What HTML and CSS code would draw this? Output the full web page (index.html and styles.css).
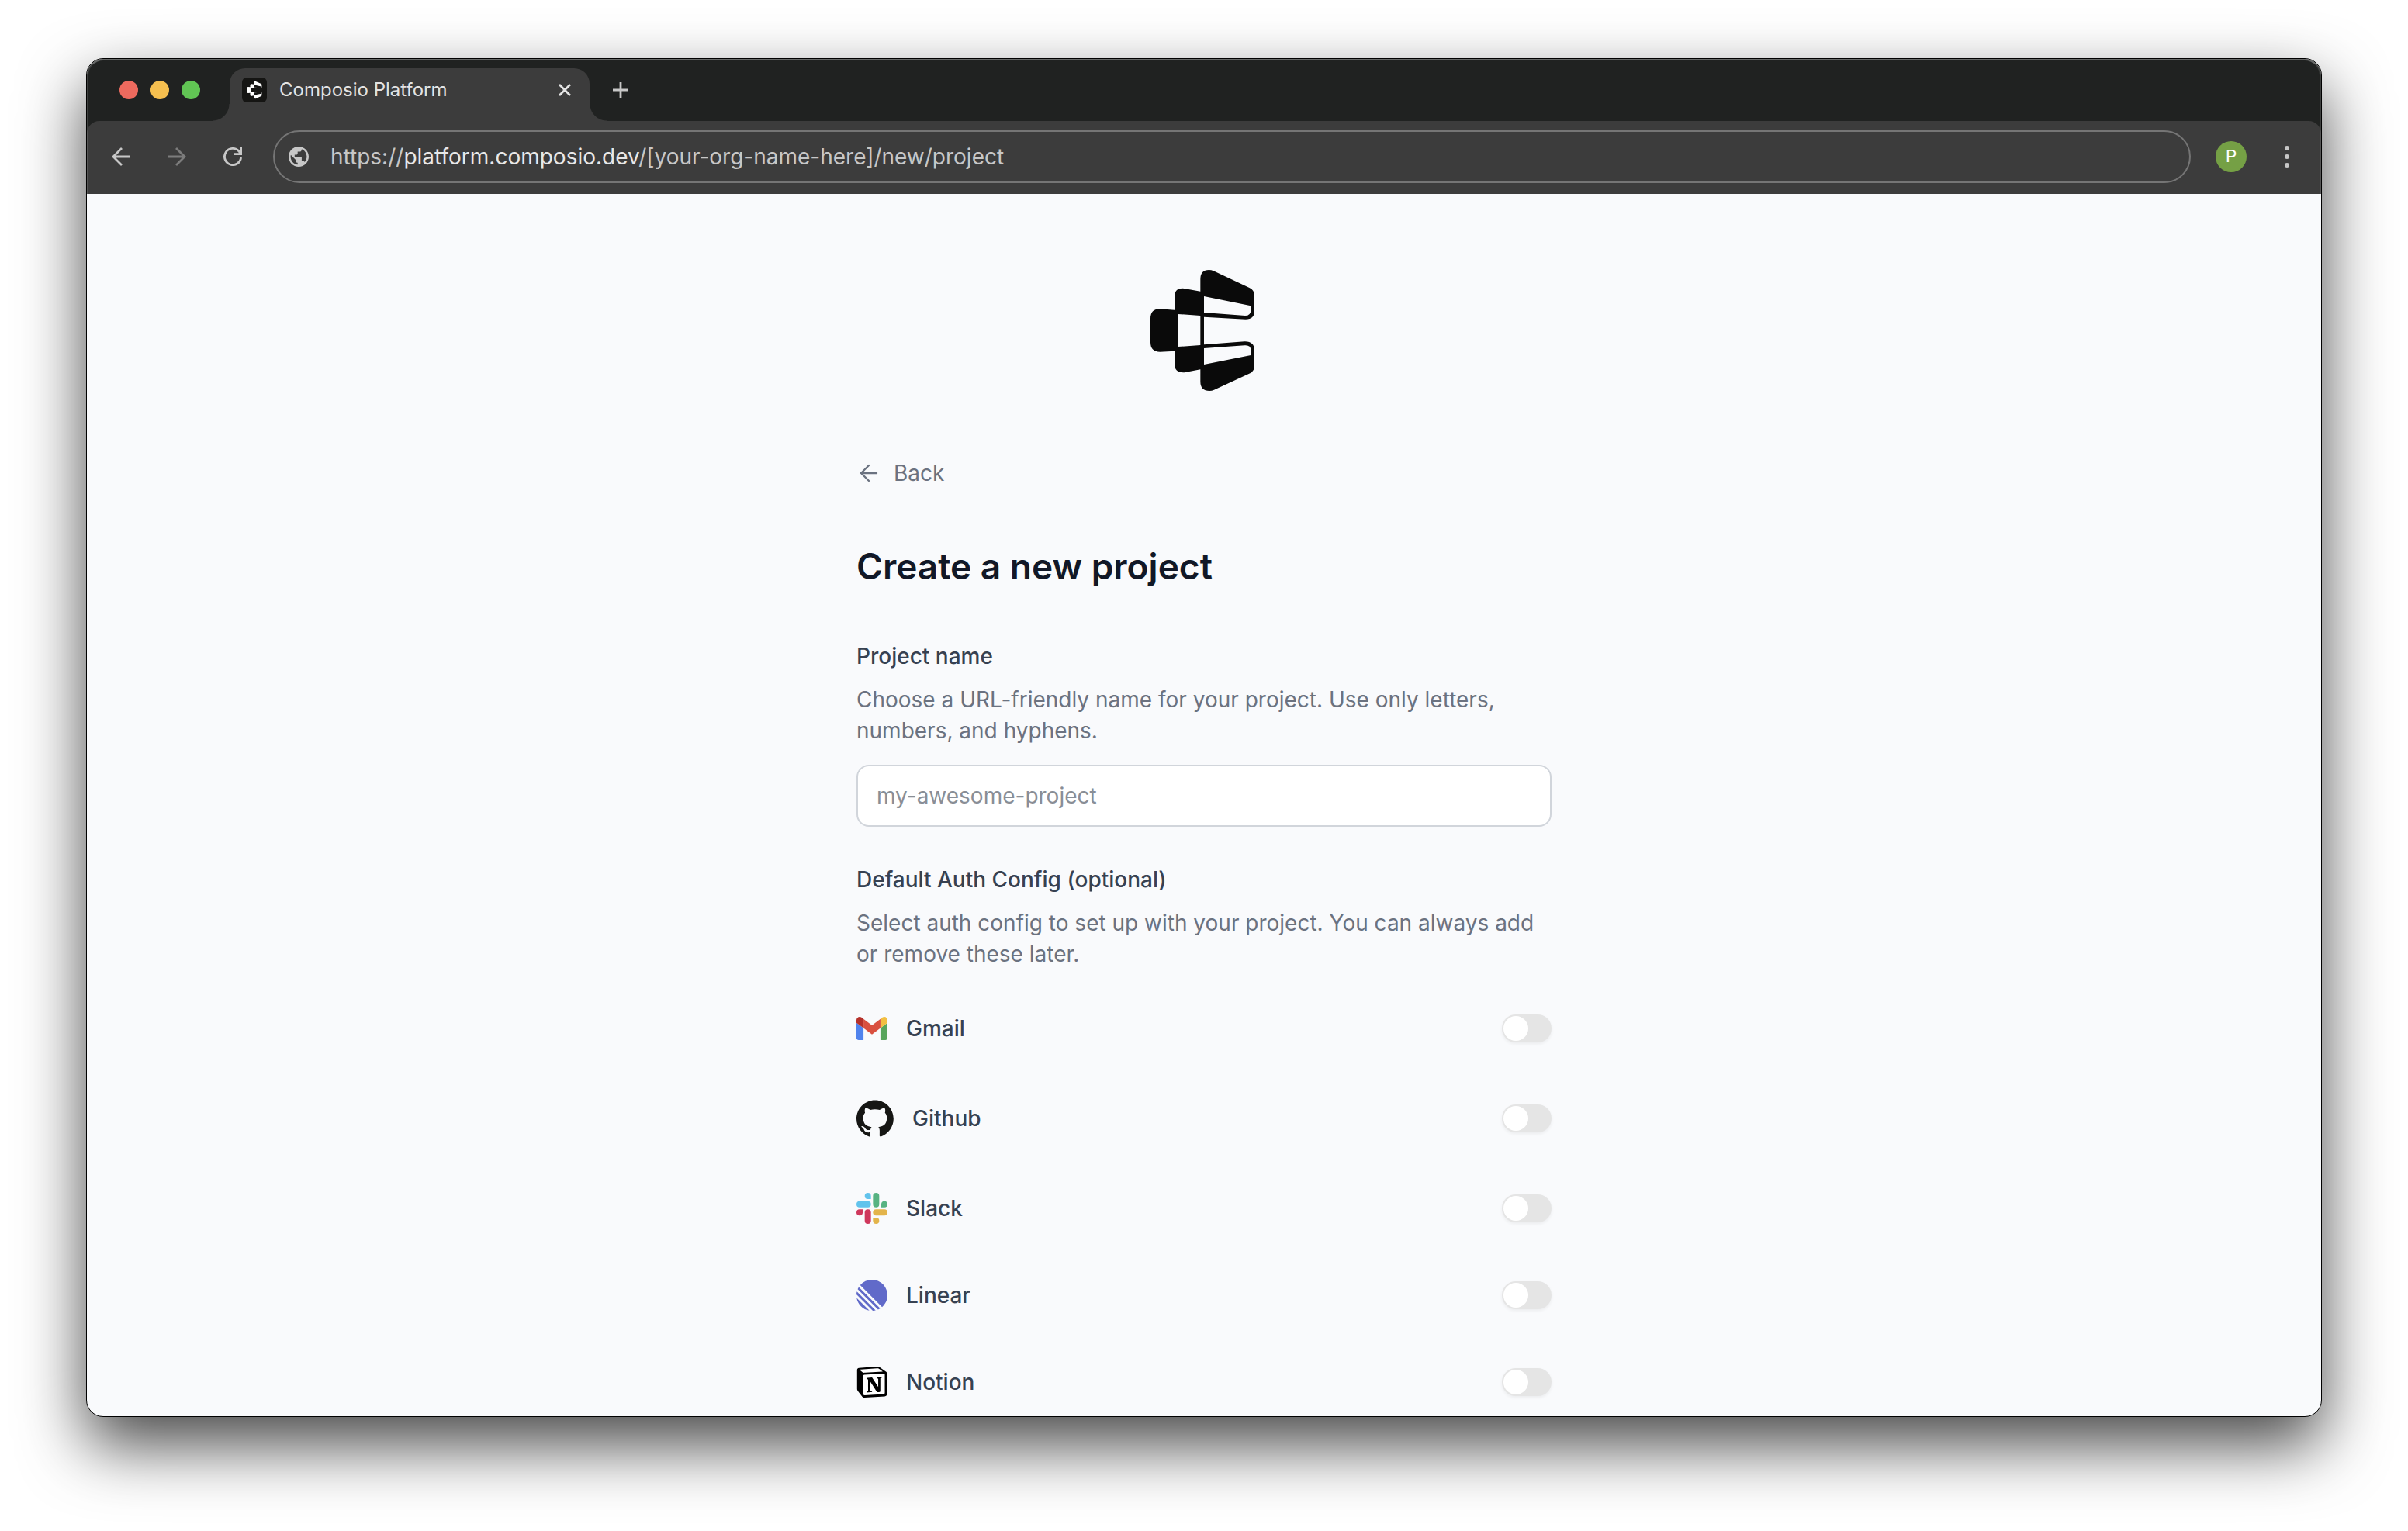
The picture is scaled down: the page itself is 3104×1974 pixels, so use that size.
FILE: index.html
```html
<!DOCTYPE html>
<html lang="en">
<head>
<meta charset="utf-8">
<title>Composio Platform</title>
<meta name="viewport" content="width=device-width, initial-scale=1">
<link rel="stylesheet" href="styles.css">
</head>
<body>
<svg class="sprite" aria-hidden="true">
  <symbol id="composio" viewBox="68 48 414 480">
    <path d="M294 54Q303 54 312 58L452 124Q470 133 470 153V212Q470 245 436 245L275 236V343L432 331Q470 330 470 366V426Q470 445 453 454L314 518Q305 522 296 522Q261 522 261 486V439L199 451Q161 453 161 418V368L105 371Q68 371 68 334V242Q68 205 105 205L161 209V158Q161 122 199 126L261 137V90Q261 54 294 54ZM275 156V219L434 231Q456 231 456 209V193ZM175 225V351L261 345V231ZM275 357V420L456 384V364Q456 344 432 346Z" fill="currentColor" fill-rule="evenodd"/>
  </symbol>
</svg>
<div class="window">
  <header class="chrome">
    <div class="tab-strip">
      <div class="lights">
        <span class="light light-close"></span>
        <span class="light light-min"></span>
        <span class="light light-max"></span>
      </div>
      <div class="tab">
        <span class="favicon"><svg width="20" height="24"><use href="#composio"/></svg></span>
        <span class="tab-title">Composio Platform</span>
        <button class="icon-button" type="button" aria-label="Close tab">
          <svg width="16" height="16" viewBox="0 0 16 16"><path d="M1 1l14 14M15 1l-14 14" stroke="#e3e3e3" stroke-width="2.800"/></svg>
        </button>
      </div>
      <button class="icon-button new-tab" type="button" aria-label="New tab">
        <svg width="20" height="20" viewBox="0 0 20 20"><path d="M10 0v20M0 10h20" stroke="#c7c7c7" stroke-width="2.800"/></svg>
      </button>
    </div>
    <div class="toolbar">
      <nav class="nav-buttons" aria-label="History">
        <button class="icon-button" type="button" aria-label="Go back">
          <svg width="24" height="24" viewBox="0 0 24 24" fill="none" stroke="#c7c7c7" stroke-width="2.800"><path d="M24 12H2M13 1L2 12l11 11"/></svg>
        </button>
        <button class="icon-button" type="button" aria-label="Go forward" disabled>
          <svg width="24" height="24" viewBox="0 0 24 24" fill="none" stroke="#7c7c7c" stroke-width="2.800"><path d="M0 12h22M11 1l11 11-11 11"/></svg>
        </button>
        <button class="icon-button" type="button" aria-label="Reload">
          <svg width="24" height="24" viewBox="0 0 24 24" fill="none" stroke="#c7c7c7" stroke-width="2.800"><path d="M22.600 13A10.600 10.600 0 1 1 20 5L22.500 8M22.600 0v8.600H14"/></svg>
        </button>
      </nav>
      <div class="address">
        <svg width="26" height="26" viewBox="2 2 20 20" aria-hidden="true"><path fill="#c7c7c7" d="M12 2C6.480 2 2 6.480 2 12s4.480 10 10 10 10-4.480 10-10S17.520 2 12 2zm-1 17.930c-3.950-.490-7-3.850-7-7.930 0-.620.080-1.210.210-1.790L9 15v1c0 1.100.900 2 2 2v1.930zm6.900-2.540c-.260-.810-1-1.390-1.900-1.390h-1v-3c0-.550-.450-1-1-1H8v-2h2c.550 0 1-.450 1-1V7h2c1.100 0 2-.900 2-2v-.410c2.930 1.190 5 4.060 5 7.410 0 2.080-.800 3.970-2.100 5.390z"/></svg>
        <div class="url" role="textbox" contenteditable="true" spellcheck="false" aria-label="Address">https://<span class="url-host">platform.composio.dev</span>/[your-org-name-here]/new/project</div>
      </div>
      <button class="avatar" type="button" aria-label="Profile">P</button>
      <button class="icon-button" type="button" aria-label="Menu">
        <svg width="6" height="28" viewBox="0 0 6 28" fill="#c7c7c7"><circle cx="3" cy="3" r="3"/><circle cx="3" cy="14" r="3"/><circle cx="3" cy="25" r="3"/></svg>
      </button>
    </div>
  </header>

  <main class="page">
    <svg class="logo" width="138" height="160" role="img" aria-label="Composio"><use href="#composio"/></svg>
    <form class="form">
      <a class="back" href="#">
        <svg width="32" height="32" viewBox="0 0 32 32" fill="none" stroke="currentColor" stroke-width="2.400" stroke-linecap="round" stroke-linejoin="round" aria-hidden="true"><path d="M26 16H6M16 6L6 16l10 10"/></svg>
        Back
      </a>
      <h1 class="title">Create a new project</h1>

      <div class="field">
        <label class="label" for="project-name">Project name</label>
        <p class="hint" id="name-hint">Choose a URL-friendly name for your project. Use only letters, numbers, and hyphens.</p>
        <input class="text-input" id="project-name" type="text" placeholder="my-awesome-project" aria-describedby="name-hint">
      </div>

      <fieldset class="field apps">
        <legend class="label">Default Auth Config (optional)</legend>
        <p class="hint">Select auth config to set up with your project. You can always add or remove these later.</p>
        <ul class="app-list">
          <li class="app">
            <svg width="40" height="40" viewBox="52 31 88 88" aria-hidden="true"><path fill="#5083ed" d="M58 108h14V74L52 59v43c0 3.320 2.690 6 6 6"/><path fill="#58a55c" d="M120 108h14c3.320 0 6-2.690 6-6V59l-20 15"/><path fill="#f2bf42" d="M120 48v26l20-15v-8c0-7.420-8.470-11.650-14.400-7.200"/><path fill="#d95040" d="M72 74V48l24 18 24-18v26L96 92"/><path fill="#b5312a" d="M52 51v8l20 15V48l-5.600-4.200c-5.940-4.450-14.400-.220-14.400 7.200"/></svg>
            <label class="app-name" for="gmail">Gmail</label>
            <input class="switch" id="gmail" type="checkbox" role="switch">
          </li>
          <li class="app">
            <svg width="48" height="48" viewBox="0 0 98 96" aria-hidden="true"><path fill="#161614" fill-rule="evenodd" d="M48.854 0C21.839 0 0 22 0 49.217c0 21.756 13.993 40.172 33.405 46.690 2.427.490 3.316-1.059 3.316-2.362 0-1.141-.080-5.052-.080-9.127-13.590 2.934-16.420-5.867-16.420-5.867-2.184-5.704-5.420-7.170-5.420-7.170-4.448-3.015.324-3.015.324-3.015 4.934.326 7.523 5.052 7.523 5.052 4.367 7.496 11.404 5.378 14.235 4.074.404-3.178 1.699-5.378 3.074-6.600-10.839-1.141-22.243-5.378-22.243-24.283 0-5.378 1.940-9.778 5.014-13.200-.485-1.222-2.184-6.275.486-13.038 0 0 4.125-1.304 13.426 5.052a46.970 46.970 0 0 1 12.214-1.630c4.125 0 8.330.571 12.213 1.630 9.302-6.356 13.427-5.052 13.427-5.052 2.670 6.763.970 11.816.485 13.038 3.155 3.422 5.015 7.822 5.015 13.200 0 18.905-11.404 23.060-22.324 24.283 1.780 1.548 3.316 4.481 3.316 9.126 0 6.600-.080 11.897-.080 13.526 0 1.304.890 2.853 3.316 2.364 19.412-6.520 33.405-24.935 33.405-46.691C97.707 22 75.788 0 48.854 0z"/></svg>
            <label class="app-name" for="github">Github</label>
            <input class="switch" id="github" type="checkbox" role="switch">
          </li>
          <li class="app">
            <svg width="40" height="40" viewBox="0 0 120 120" aria-hidden="true"><g fill="#62c3ec"><path d="M56 24V12a12 12 0 1 0-12 12z"/><rect y="32" width="56" height="24" rx="12"/></g><g fill="#57b382"><rect x="64" width="24" height="56" rx="12"/><path d="M96 56V44a12 12 0 1 1 12 12z"/></g><g fill="#e3b44b"><rect x="64" y="64" width="56" height="24" rx="12"/><path d="M64 96v12a12 12 0 1 0 12-12z"/></g><g fill="#cf375c"><path d="M24 64v12a12 12 0 1 1-12-12z"/><rect x="32" y="64" width="24" height="56" rx="12"/></g></svg>
            <label class="app-name" for="slack">Slack</label>
            <input class="switch" id="slack" type="checkbox" role="switch">
          </li>
          <li class="app">
            <svg width="40" height="40" viewBox="0 0 24 24" aria-hidden="true"><path fill="#616ac9" d="M2.886 4.180A11.982 11.982 0 0 1 11.990 0C18.624 0 24 5.376 24 12.009c0 3.640-1.620 6.903-4.180 9.105L2.887 4.180ZM1.817 5.626l16.556 16.556c-.524.330-1.075.620-1.650.866L.951 7.277c.247-.575.537-1.126.866-1.650ZM.322 9.163l14.515 14.515c-.710.172-1.443.282-2.195.322L0 11.358a12 12 0 0 1 .322-2.195Zm-.170 4.862 9.823 9.824a12.020 12.020 0 0 1-9.824-9.824Z"/></svg>
            <label class="app-name" for="linear">Linear</label>
            <input class="switch" id="linear" type="checkbox" role="switch">
          </li>
          <li class="app">
            <svg width="40" height="40" viewBox="0 0 24 24" aria-hidden="true"><path fill="#fff" d="M2 1.500l15-1 6 4v17l-17 1.500-5-5z"/><path d="M4.459 4.208c.746.606 1.026.560 2.428.466l13.215-.793c.280 0 .047-.280-.046-.326L17.860 1.968c-.420-.326-.981-.700-2.055-.607L3.010 2.295c-.466.046-.560.280-.374.466zm.793 3.080v13.904c0 .747.373 1.027 1.214.980l14.523-.840c.841-.046.935-.560.935-1.167V6.354c0-.606-.233-.933-.748-.887l-15.177.887c-.560.047-.747.327-.747.933zm14.337.745c.093.420 0 .840-.420.888l-.700.140v10.264c-.608.327-1.168.514-1.635.514-.748 0-.935-.234-1.495-.933l-4.577-7.186v6.952L12.210 19s0 .840-1.168.840l-3.222.186c-.093-.186 0-.653.327-.746l.840-.233V9.854L7.822 9.760c-.094-.420.140-1.026.793-1.073l3.456-.233 4.764 7.279v-6.440l-1.215-.139c-.093-.514.280-.887.747-.933zM1.936 1.035l13.310-.980c1.634-.140 2.055-.047 3.082.700l4.249 2.986c.700.513.934.653.934 1.213v16.378c0 1.026-.373 1.634-1.680 1.726l-15.458.934c-.980.047-1.448-.093-1.962-.747l-3.129-4.060c-.560-.747-.793-1.306-.793-1.960V2.667c0-.839.374-1.540 1.447-1.632z"/></svg>
            <label class="app-name" for="notion">Notion</label>
            <input class="switch" id="notion" type="checkbox" role="switch">
          </li>
        </ul>
      </fieldset>
    </form>
  </main>
</div>
</body>
</html>
```
FILE: styles.css
```css
*,
*::before,
*::after {
  box-sizing: border-box;
}

body {
  display: flex;
  flex-direction: column;
  min-height: 100vh;
  margin: 0;
  padding: 75px 111px 147px;
  background: #fff;
  font-family: Inter, "Liberation Sans", sans-serif;
  font-size: 28px;
  line-height: 40px;
}

button {
  border: 0;
  padding: 0;
  background: none;
  font: inherit;
}

svg {
  display: block;
  flex: none;
}

.sprite {
  position: absolute;
  width: 0;
  height: 0;
}

/* Browser window */
.window {
  display: flex;
  flex: 1;
  flex-direction: column;
  overflow: hidden;
  border: 1px solid #000;
  border-radius: 22px;
  background: #f9fafc;
  box-shadow: 0 36px 84px rgba(0, 0, 0, 0.72);
}

.chrome {
  position: relative;
  background: #202221;
}

/* Light rim along the top and sides of the title bar */
.chrome::after {
  content: "";
  position: absolute;
  inset: 0;
  border: 2px solid rgba(255, 255, 255, 0.14);
  border-top-color: rgba(255, 255, 255, 0.32);
  border-bottom: 0;
  border-radius: 21px 21px 0 0;
  pointer-events: none;
}

.tab-strip {
  display: flex;
  align-items: flex-end;
  height: 80px;
  padding-left: 42px;
}

.lights {
  display: flex;
  align-self: center;
  gap: 16px;
  margin-right: 38px;
}

.light {
  width: 24px;
  height: 24px;
  border-radius: 50%;
}

.light-close {
  background: #ed6a5e;
}

.light-min {
  background: #f5bf4f;
}

.light-max {
  background: #61c554;
}

.tab {
  position: relative;
  display: flex;
  align-items: center;
  width: 464px;
  height: 68px;
  padding: 0 24px 12px 16px;
  border-radius: 20px 20px 0 0;
  background: #3c3c3c;
}

/* Flared feet of the active tab */
.tab::before,
.tab::after {
  content: "";
  position: absolute;
  bottom: 0;
  width: 22px;
  height: 22px;
}

.tab::before {
  right: 100%;
  background: radial-gradient(circle at 0 0, transparent 21px, #3c3c3c 22px);
}

.tab::after {
  left: 100%;
  background: radial-gradient(circle at 100% 0, transparent 21px, #3c3c3c 22px);
}

.favicon {
  display: grid;
  place-items: center;
  width: 32px;
  height: 32px;
  margin-right: 16px;
  border-radius: 6px;
  background: #151513;
  color: #fff;
}

.tab-title {
  flex: 1;
  color: #e3e3e3;
  font-size: 24px;
}

.icon-button {
  flex: none;
}

.new-tab {
  align-self: center;
  margin-left: 30px;
}

.toolbar {
  display: flex;
  align-items: center;
  height: 94px;
  padding: 0 41px 2px 32px;
  border-radius: 16px 16px 0 0;
  background: #3c3c3c;
}

.nav-buttons {
  display: flex;
  gap: 48px;
  margin-right: 40px;
}

.address {
  display: flex;
  flex: 1;
  align-items: center;
  gap: 28px;
  height: 68px;
  padding: 0 18px;
  border: 2px solid #757575;
  border-radius: 34px;
}

.url {
  flex: 1;
  color: #c7c7c7;
  white-space: nowrap;
}

.url-host {
  color: #e8e8e8;
}

.avatar {
  width: 40px;
  height: 40px;
  margin: 0 49px 0 32px;
  border-radius: 50%;
  background: #75a045;
  color: #fff;
  font-family: Roboto, "Liberation Sans", sans-serif;
  font-size: 22px;
}

/* New project page */
.page {
  display: flex;
  flex: 1;
  flex-direction: column;
  align-items: center;
  gap: 84px;
  padding: 96px 24px 16px;
}

.logo {
  color: #0a0a0a;
}

.form {
  width: 100%;
  max-width: 896px;
}

.back {
  display: flex;
  align-items: center;
  gap: 16px;
  width: max-content;
  color: #6b7280;
  text-decoration: none;
}

.title {
  margin: 68px 0 64px;
  color: #111827;
  font-size: 46px;
  font-weight: 600;
  line-height: 64px;
}

.field {
  margin: 0 0 48px;
  padding: 0;
  border: 0;
}

.label {
  display: block;
  padding: 0;
  color: #374151;
  font-weight: 500;
}

.hint {
  margin: 16px 0 24px;
  color: #6b7280;
}

.text-input {
  display: block;
  width: 100%;
  height: 80px;
  padding: 0 24px;
  border: 2px solid #d1d5db;
  border-radius: 16px;
  background: #fff;
  color: #111827;
  font: inherit;
}

.text-input::placeholder {
  color: #898e96;
  opacity: 1;
}

.apps {
  margin-bottom: 0;
}

.app-list {
  display: grid;
  gap: 72px;
  margin: 56px 0 0;
  padding: 0;
  list-style: none;
}

.app {
  display: flex;
  align-items: center;
  gap: 24px;
}

.app-name {
  flex: 1;
  color: #374151;
  font-weight: 500;
}

.switch {
  appearance: none;
  width: 64px;
  height: 36px;
  margin: 0;
  padding: 2px;
  border-radius: 18px;
  background: #e5e5e5;
  box-shadow: 0 2px 4px rgba(0, 0, 0, 0.06);
}

.switch::before {
  content: "";
  display: block;
  width: 32px;
  height: 32px;
  border-radius: 50%;
  background: #fff;
}

.switch:checked {
  background: #171717;
}

.switch:checked::before {
  margin-left: auto;
}
```
